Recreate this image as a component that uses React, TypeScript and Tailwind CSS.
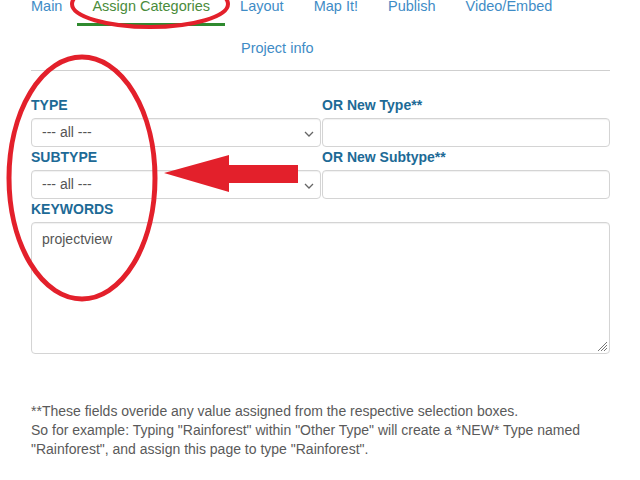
import React from 'react';

const navTop = ['Main', 'Assign Categories', 'Layout', 'Map It!', 'Publish', 'Video/Embed'];

function Chevron() {
    return (
        <svg width="10" height="6" viewBox="0 0 10 6" className="absolute right-[6px] top-[12px]">
            <path d="M1 1 L5 5 L9 1" fill="none" stroke="#666" strokeWidth="1.3" />
        </svg>
    );
}

function SelectBox() {
    return (
        <div className="relative h-[29px] border border-[#d4d4d4] rounded-[4px] bg-white shadow-[inset_0_1px_1px_rgba(0,0,0,0.06)] px-[10px] flex items-center text-[14px] text-[#555]">
            --- all ---
            <Chevron />
        </div>
    );
}

function TextBox() {
    return <div className="h-[29px] border border-[#d4d4d4] rounded-[4px] bg-white shadow-[inset_0_1px_1px_rgba(0,0,0,0.06)]" />;
}

function Label({ children }: { children: React.ReactNode }) {
    return <div className="h-[20px] leading-[20px] mb-[3px] text-[14px] font-bold text-[#1d6a96]">{children}</div>;
}

export default function App() {
    return (
        <div className="relative w-[640px] h-[480px] overflow-hidden bg-white font-['Liberation_Sans',Arial,sans-serif]">
            {/* Tabs */}
            <div className="-mt-[14px] pl-[16px] text-[14.5px] leading-[20px]">
                <div className="flex">
                    {navTop.map((t, i) => (
                        <div
                            key={t}
                            className={
                                i === 1
                                    ? 'px-[15px] pt-[10px] pb-[7px] border-b-[3px] border-[#2f8a2f] text-[#4a8b3b]'
                                    : 'px-[15px] py-[10px] text-[#3f8cc6]'
                            }
                        >
                            {t}
                        </div>
                    ))}
                </div>
                <div className="flex pl-[210px]">
                    <div className="px-[15px] pt-[12px] pb-[11px] text-[#3f8cc6]">Project info</div>
                </div>
            </div>
            <div className="ml-[31px] w-[579px] border-t border-[#cfcfcf] mt-[1px]" />

            {/* Form */}
            <div className="ml-[31px] w-[579px] mt-[24px]">
                <div className="grid grid-cols-[290px_288px] gap-x-[1px]">
                    <div>
                        <Label>TYPE</Label>
                        <SelectBox />
                    </div>
                    <div>
                        <Label>OR New Type**</Label>
                        <TextBox />
                    </div>
                    <div>
                        <Label>SUBTYPE</Label>
                        <SelectBox />
                    </div>
                    <div>
                        <Label>OR New Subtype**</Label>
                        <TextBox />
                    </div>
                </div>
                <Label>KEYWORDS</Label>
                <div className="relative h-[132px] border border-[#d4d4d4] rounded-[4px] bg-white shadow-[inset_0_1px_1px_rgba(0,0,0,0.06)] px-[10px] py-[6px] text-[14px] leading-[20px] text-[#555]">
                    projectview
                    <svg width="12" height="12" viewBox="0 0 12 12" className="absolute right-[1px] bottom-[1px]">
                        <path d="M11 2 L2 11 M11 5 L5 11 M11 8 L8 11" stroke="#777" strokeWidth="1" />
                    </svg>
                </div>
            </div>

            {/* Footnote */}
            <div className="ml-[31px] mt-[48px] text-[14px] leading-[19px] text-[#5a5a5a]">
                <div>**These fields overide any value assigned from the respective selection boxes.</div>
                <div>So for example: Typing "Rainforest" within "Other Type" will create a *NEW* Type named</div>
                <div>"Rainforest", and assign this page to type "Rainforest".</div>
            </div>

            {/* Red annotations */}
            <svg className="absolute inset-0 pointer-events-none" width="640" height="480" viewBox="0 0 640 480">
                <ellipse cx="150" cy="4" rx="78" ry="23" fill="none" stroke="#e3202b" strokeWidth="4" />
                <ellipse cx="82" cy="178" rx="73" ry="121" fill="none" stroke="#e3202b" strokeWidth="5" />
                <polygon points="164,173 229,155 229,165 298,165 298,183 229,183 229,192" fill="#e3202b" />
            </svg>
        </div>
    );
}
